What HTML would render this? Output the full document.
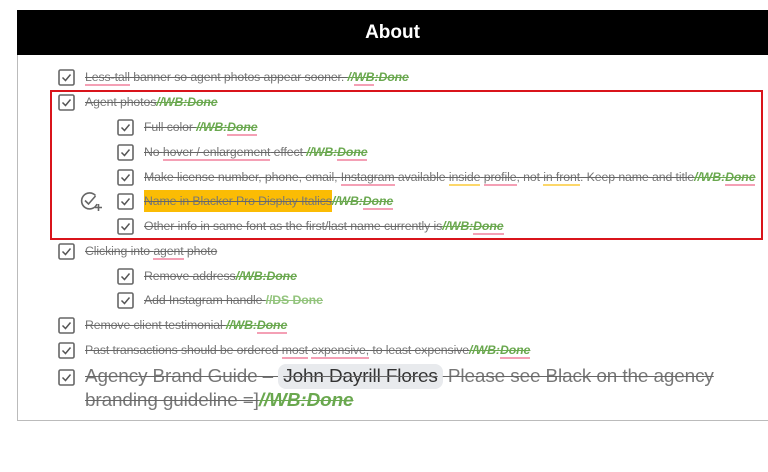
<!DOCTYPE html>
<html><head><meta charset="utf-8"><style>
*{margin:0;padding:0;box-sizing:border-box}
body{width:768px;height:472px;background:#fff;position:relative;overflow:hidden;font-family:"Liberation Sans",sans-serif}
.hdr{position:absolute;left:17px;top:10px;width:751px;height:45px;background:#000;color:#fff;font-weight:bold;font-size:19px;text-align:center;line-height:45px}
.frame{position:absolute;left:17px;top:55px;width:760px;height:366px;border-left:1px solid #bbb;border-bottom:1px solid #bbb}
.red{position:absolute;left:50px;top:90px;width:713px;height:150px;border:2px solid #d9141b}
.r{position:absolute;height:20px;display:flex;align-items:center;white-space:nowrap;font-size:12.3px;color:#777;letter-spacing:-0.1px}
.r svg{flex:none;margin-right:10px}
.t{text-decoration:line-through;text-decoration-color:#666}
.d{color:#6aa84f;font-weight:bold;font-style:italic;text-decoration:line-through}
.u{background:linear-gradient(#f4a0b5,#f4a0b5) left bottom/100% 2px no-repeat;padding-bottom:2px}
.y{background:linear-gradient(#fcd76a,#fcd76a) left bottom/100% 2px no-repeat;padding-bottom:2px}
.hl{background:#fbbc04;padding:4px 0}
.big{font-size:18.9px}
.chip{background:#e8eaed;border-radius:8px;padding:2px 5px;color:#333}
</style></head><body>
<div class="hdr">About</div>
<div class="frame"></div>
<div class="red"></div>
<svg width="0" height="0" style="position:absolute"><defs><symbol id="c" viewBox="0 0 17 17"><rect x="1" y="1" width="15" height="15" rx="1.5" fill="none" stroke="#666" stroke-width="1.6"/><path d="M4.5 8.5l3 3 5-6" fill="none" stroke="#555" stroke-width="1.5"/></symbol></defs></svg>

<div class="r" style="left:58px;top:67px"><svg width="17" height="17"><use href="#c"/></svg><span class="t"><span class="u">Less-tall</span> banner so agent photos appear sooner. <span class="d">//<span class="u">WB</span>:Done</span></span></div>
<div class="r" style="left:58px;top:92px"><svg width="17" height="17"><use href="#c"/></svg><span class="t">Agent photos<span class="d">//WB:Done</span></span></div>
<div class="r" style="left:117px;top:117px"><svg width="17" height="17"><use href="#c"/></svg><span class="t">Full color <span class="d">//WB:<span class="u">Done</span></span></span></div>
<div class="r" style="left:117px;top:142px"><svg width="17" height="17"><use href="#c"/></svg><span class="t">No <span class="u">hover / enlargement</span> effect <span class="d">//WB:<span class="u">Done</span></span></span></div>
<div class="r" style="left:117px;top:167px"><svg width="17" height="17"><use href="#c"/></svg><span class="t">Make license number, phone, email, <span class="u">Instagram</span> available <span class="y">inside</span> <span class="u">profile</span>, not <span class="y">in front</span>. Keep name and title<span class="d">//WB:<span class="u">Done</span></span></span></div>
<svg style="position:absolute;left:80px;top:191px" width="24" height="22" viewBox="0 0 24 22"><path d="M15.5 4.5A8 8 0 1 0 17 13" fill="none" stroke="#666" stroke-width="1.6"/><path d="M5 9.5l3.5 3.5 7-8" fill="none" stroke="#666" stroke-width="1.6"/><path d="M15 16.5h7M18.5 13v7" stroke="#666" stroke-width="1.6"/></svg>
<div class="r" style="left:117px;top:191px"><svg width="17" height="17"><use href="#c"/></svg><span class="t"><span class="hl">Name in Blacker Pro Display Italics</span><span class="d">//WB:<span class="u">Done</span></span></span></div>
<div class="r" style="left:117px;top:216px"><svg width="17" height="17"><use href="#c"/></svg><span class="t">Other info in same font as the first/last name currently is<span class="d">//WB:<span class="u">Done</span></span></span></div>
<div class="r" style="left:58px;top:241px"><svg width="17" height="17"><use href="#c"/></svg><span class="t">Clicking into <span class="u">agent</span> photo</span></div>
<div class="r" style="left:117px;top:266px"><svg width="17" height="17"><use href="#c"/></svg><span class="t">Remove address<span class="d">//WB:Done</span></span></div>
<div class="r" style="left:117px;top:290px"><svg width="17" height="17"><use href="#c"/></svg><span class="t">Add Instagram handle <span class="d" style="font-style:normal;color:#93c47d">//DS Done</span></span></div>
<div class="r" style="left:58px;top:315px"><svg width="17" height="17"><use href="#c"/></svg><span class="t">Remove client testimonial <span class="d">//WB:<span class="u">Done</span></span></span></div>
<div class="r" style="left:58px;top:340px"><svg width="17" height="17"><use href="#c"/></svg><span class="t">Past transactions should be ordered <span class="u">most</span> <span class="u">expensive,</span> to least expensive<span class="d">//WB:<span class="u">Done</span></span></span></div>
<div class="r" style="left:58px;top:366px;height:22px"><svg width="17" height="17"><use href="#c"/></svg><span class="t big">Agency Brand Guide – <span class="chip">John Dayrill Flores</span> Please see Black on the agency</span></div>
<div class="r" style="left:85px;top:390px;height:22px"><span class="t big">branding guideline =]<span class="d">//WB:Done</span></span></div>
</body></html>
